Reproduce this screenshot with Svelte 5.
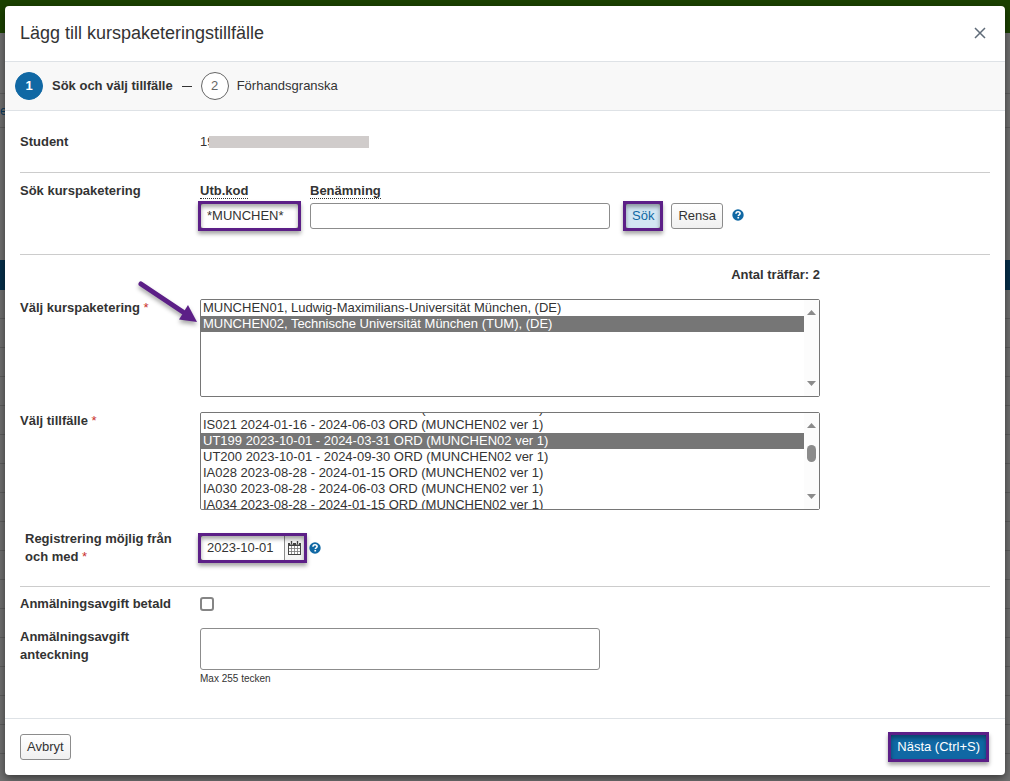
<script>
  import { onMount } from 'svelte'

  const packages = [
    { code: 'MUNCHEN01', label: 'MUNCHEN01, Ludwig-Maximilians-Universität München, (DE)' },
    { code: 'MUNCHEN02', label: 'MUNCHEN02, Technische Universität München (TUM), (DE)' },
  ]

  const occasions = [
    'IS020 2024-01-16 - 2024-06-03',
    'IS021 2024-01-16 - 2024-06-03',
    'UT199 2023-10-01 - 2024-03-31',
    'UT200 2023-10-01 - 2024-09-30',
    'IA028 2023-08-28 - 2024-01-15',
    'IA030 2023-08-28 - 2024-06-03',
    'IA034 2023-08-28 - 2024-01-15',
    'IA035 2023-08-28 - 2024-06-03',
  ]

  let code = $state('*MUNCHEN*')
  let title = $state('')
  let selectedPackage = $state('MUNCHEN02')
  let selectedOccasion = $state(occasions[2])
  let date = $state('2023-10-01')
  let feePaid = $state(false)
  let note = $state('')
  let occasionList

  function clearSearch() {
    code = ''
    title = ''
  }

  onMount(() => {
    occasionList.scrollTop = 12
  })
</script>

{#snippet help()}
  <button type="button" class="help" aria-label="Hjälp">
    <svg viewBox="0 0 12 12" width="12" height="12">
      <circle cx="6" cy="6" r="5.7" fill="#1068a4" />
      <path d="M4 4.7C4 3.3 4.9 2.8 6 2.8s2.1.6 2.1 1.7C8.1 5.8 6.3 5.8 6.3 7" fill="none" stroke="#fff" stroke-width="1.6" />
      <rect x="5.4" y="7.9" width="1.7" height="1.6" fill="#fff" />
    </svg>
  </button>
{/snippet}

{#snippet scrollbar(thumb)}
  <div class="scrollbar" aria-hidden="true">
    <svg viewBox="0 0 9 5" width="9" height="5"><path d="M4.5 0 9 5H0z" fill="#8b8b8b" /></svg>
    {#if thumb}<span class="thumb"></span>{/if}
    <svg class="down" viewBox="0 0 9 5" width="9" height="5"><path d="M4.5 5 9 0H0z" fill="#8b8b8b" /></svg>
  </div>
{/snippet}

<div class="screen">
  <div class="page" aria-hidden="true">
    <div class="topbar"></div>
    <div class="menu"></div>
    <div class="tabs">e</div>
    <div class="upper"></div>
    <div class="band"></div>
    <div class="rows"></div>
  </div>

  <div class="modal" role="dialog" aria-labelledby="modal-title">
    <header>
      <h1 id="modal-title">Lägg till kurspaketeringstillfälle</h1>
      <button type="button" class="close" aria-label="Stäng">
        <svg viewBox="0 0 12 12" width="12" height="12">
          <path d="M1 1l10 10M11 1L1 11" stroke="#5f6b78" stroke-width="1.5" />
        </svg>
      </button>
    </header>

    <ol class="steps">
      <li class="active"><span class="num">1</span>Sök och välj tillfälle</li>
      <li class="dash" aria-hidden="true"></li>
      <li><span class="num">2</span>Förhandsgranska</li>
    </ol>

    <main>
      <section class="row student">
        <span class="label">Student</span>
        <span class="person">19<span class="mask"></span></span>
      </section>

      <section class="row search">
        <span class="label">Sök kurspaketering</span>
        <div class="fields">
          <div class="field code">
            <label for="code"><abbr title="Utbildningskod">Utb.kod</abbr></label>
            <span class="marked"><input id="code" type="text" bind:value={code} /></span>
          </div>
          <div class="field title">
            <label for="title"><abbr title="Benämning">Benämning</abbr></label>
            <input id="title" type="text" bind:value={title} />
          </div>
          <span class="marked find"><button type="button" class="btn">Sök</button></span>
          <button type="button" class="btn" onclick={clearSearch}>Rensa</button>
          {@render help()}
        </div>
      </section>

      <section class="choices">
        <p class="hits">Antal träffar: 2</p>
        <div class="row">
          <label class="label" for="package">Välj kurspaketering <i>*</i></label>
          <div class="listbox">
            <svg class="arrow" viewBox="0 0 66 48" width="66" height="48" aria-hidden="true">
              <path d="M6 4L48 32" stroke="#5c1f87" stroke-width="5" stroke-linecap="round" />
              <path d="M62 42L44 39.5L53 25z" fill="#5c1f87" />
            </svg>
            <select id="package" size="6" bind:value={selectedPackage}>
              {#each packages as p}
                <option value={p.code}>{p.label}</option>
              {/each}
            </select>
            {@render scrollbar(false)}
          </div>
        </div>
        <div class="row">
          <label class="label" for="occasion">Välj tillfälle <i>*</i></label>
          <div class="listbox">
            <select id="occasion" size="6" bind:value={selectedOccasion} bind:this={occasionList}>
              {#each occasions as o}
                <option value={o}>{o} ORD (MUNCHEN02 ver 1)</option>
              {/each}
            </select>
            {@render scrollbar(true)}
          </div>
        </div>
        <div class="row register">
          <label class="label" for="date">Registrering möjlig från och med <i>*</i></label>
          <div class="date">
            <span class="marked">
              <input id="date" type="text" bind:value={date} />
              <button type="button" class="calendar" aria-label="Välj datum">
                <svg viewBox="0 0 13 14" width="13" height="14">
                  <rect x="0.5" y="2.5" width="12" height="11" fill="#fff" stroke="#444" />
                  <path d="M0 2h13v3H0z" fill="#444" />
                  <path d="M3.5 5v8M6.5 5v8M9.5 5v8M1 7.5h11M1 10.5h11" stroke="#777" stroke-width="0.8" />
                  <path d="M3.5 0.5v3M9.5 0.5v3" stroke="#fff" stroke-width="3" />
                  <path d="M3.5 0v3.5M9.5 0v3.5" stroke="#444" stroke-width="1.4" />
                </svg>
              </button>
            </span>
            {@render help()}
          </div>
        </div>
      </section>

      <section class="fee">
        <div class="row">
          <label class="label" for="paid">Anmälningsavgift betald</label>
          <input id="paid" type="checkbox" bind:checked={feePaid} />
        </div>
        <div class="row note">
          <label class="label" for="note">Anmälningsavgift anteckning</label>
          <div class="notebox">
            <textarea id="note" maxlength="255" bind:value={note}></textarea>
            <small>Max 255 tecken</small>
          </div>
        </div>
      </section>
    </main>

    <footer>
      <button type="button" class="btn">Avbryt</button>
      <span class="marked"><button type="button" class="btn primary">Nästa (Ctrl+S)</button></span>
    </footer>
  </div>
</div>

<style>
  :global(body) {
    margin: 0;
    background: #707070;
  }
  .screen {
    display: grid;
    min-height: 100vh;
    font: 13px/18px 'Liberation Sans', Arial, sans-serif;
    color: #333;
  }
  .screen * {
    box-sizing: border-box;
  }
  .page,
  .modal {
    grid-area: 1 / 1;
  }

  /* Dimmed page behind the dialog */
  .page {
    display: flex;
    flex-direction: column;
    background: #707070;
  }
  .topbar {
    height: 33px;
    background: #1b4200;
  }
  .menu {
    height: 61px;
    border-bottom: 1px solid #5e5e5e;
  }
  .tabs {
    height: 34px;
    border-bottom: 1px solid #5e5e5e;
    line-height: 34px;
    color: #0a3a5c;
  }
  .upper {
    height: 132px;
  }
  .band {
    height: 30px;
    background: #06304b;
  }
  .rows {
    flex: 1;
    background: repeating-linear-gradient(transparent 0 28px, #5e5e5e 28px 29px);
  }

  .modal {
    display: flex;
    flex-direction: column;
    margin: 6px 5px;
    border-radius: 4px;
    background: #fff;
    box-shadow: 0 3px 9px rgba(0, 0, 0, 0.5);
  }
  header {
    display: flex;
    align-items: center;
    justify-content: space-between;
    height: 56px;
    padding: 0 19px 2px 15px;
    border-bottom: 1px solid #dee2e6;
  }
  h1 {
    margin: 0;
    font-size: 18px;
    font-weight: 400;
  }
  button {
    font: inherit;
    cursor: pointer;
  }
  .close,
  .help {
    display: flex;
    padding: 0;
    border: 0;
    background: none;
  }

  .steps {
    display: flex;
    align-items: center;
    gap: 9px;
    height: 49px;
    margin: 0;
    padding: 0 10px;
    list-style: none;
    border-bottom: 1px solid #dee2e6;
    background: #f8f8f8;
  }
  .steps li {
    display: flex;
    align-items: center;
    gap: 8px;
  }
  .steps .active {
    gap: 9px;
    font-weight: 700;
  }
  .steps .dash {
    width: 10px;
    height: 1px;
    background: #333;
  }
  .num {
    display: grid;
    place-items: center;
    width: 28px;
    height: 28px;
    border: 1px solid #666;
    border-radius: 50%;
    color: #666;
    background: #fff;
  }
  .active .num {
    border-color: #1068a4;
    color: #fff;
    background: #1068a4;
  }

  main {
    flex: 1;
    padding: 0 15px;
  }
  section {
    border-bottom: 1px solid #ccc;
  }
  .row {
    display: flex;
    align-items: flex-start;
  }
  .label {
    flex: none;
    width: 180px;
    padding-right: 20px;
    font-weight: 700;
  }
  .label i {
    color: #c9302c;
    font-style: normal;
    font-weight: 400;
  }
  .student {
    padding: 22px 0 21px;
  }
  .person {
    display: flex;
    align-items: center;
  }
  .mask {
    width: 160px;
    height: 12px;
    margin-left: -5px;
    background: #d0cccb;
  }

  .search {
    padding: 9px 0 25px;
  }
  .fields {
    display: flex;
    flex: 1;
    align-items: flex-end;
  }
  .field {
    display: flex;
    flex-direction: column;
    align-items: stretch;
    gap: 4px;
    font-weight: 700;
  }
  .field label {
    line-height: 17px;
  }
  .code {
    width: 99px;
    margin-right: 11px;
  }
  .title {
    flex: 0 1 300px;
    margin-right: 15px;
  }
  abbr {
    border-bottom: 1px dotted #333;
    text-decoration: none;
  }
  input[type='text'],
  textarea {
    width: 100%;
    padding: 0 6px 2px;
    font: inherit;
    font-weight: 400;
    color: #333;
    background: #fff;
    border: 1px solid #8c8c8c;
    border-radius: 3px;
  }
  input[type='text'] {
    height: 26px;
  }
  .btn {
    height: 26px;
    padding: 0 6px;
    color: #333;
    background: linear-gradient(#fff, #f0f0f0);
    border: 1px solid #8c8c8c;
    border-radius: 3px;
  }
  .fields .help {
    margin: 0 0 8px 9px;
  }

  /* Highlight frame around a control */
  .marked {
    position: relative;
    display: flex;
  }
  .marked::after {
    content: '';
    position: absolute;
    inset: -2px;
    border: 3px solid #5c1f87;
    box-shadow:
      0 3px 4px rgba(0, 0, 0, 0.35),
      inset 0 3px 4px rgba(0, 0, 0, 0.35);
    pointer-events: none;
  }
  .find {
    margin-right: 10px;
  }
  .find .btn {
    color: #1068a4;
    background: #d3e6f3;
  }

  .hits {
    width: 800px;
    max-width: 100%;
    margin: 0 0 15px;
    text-align: right;
    font-weight: 700;
  }
  .choices {
    padding: 11px 0 20px;
  }
  .choices .row {
    margin-bottom: 15px;
  }
  .listbox {
    position: relative;
    display: flex;
    flex: 0 1 620px;
    border: 1px solid #767676;
    border-radius: 2px;
  }
  select {
    flex: 1;
    min-width: 0;
    height: 96px;
    padding: 0;
    font: inherit;
    color: #333;
    background: #fff;
    border: 0;
    outline: 0;
    overflow-y: auto;
    scrollbar-width: none;
  }
  option {
    height: 16px;
    min-height: 16px;
    padding: 0 2px;
    line-height: 16px;
  }
  option:checked {
    color: #fff;
    background: #767676 linear-gradient(#767676, #767676);
  }
  .scrollbar {
    display: flex;
    flex-direction: column;
    align-items: center;
    width: 15px;
    padding: 10px 0;
    background: #fcfcfc;
  }
  .thumb {
    width: 9px;
    height: 17px;
    margin-top: 17px;
    border-radius: 5px;
    background: #8b8b8b;
  }
  .down {
    margin-top: auto;
  }
  .arrow {
    position: absolute;
    right: 100%;
    top: -20px;
    filter: drop-shadow(0 3px 2px rgba(0, 0, 0, 0.35));
  }

  .choices .register {
    margin: 20px 0 0;
  }
  .register .label {
    padding: 0 20px 0 5px;
  }
  .date {
    display: flex;
    align-items: center;
    gap: 4px;
    margin-top: 5px;
  }
  .date .marked {
    width: 105px;
  }
  .date input[type='text'] {
    border-right: 0;
    border-radius: 3px 0 0 3px;
  }
  .calendar {
    display: grid;
    place-items: center;
    width: 21px;
    flex: none;
    padding: 0;
    border: 1px solid #8c8c8c;
    background: #f6f6f6;
  }

  .fee {
    padding: 8px 0 30px;
    border-bottom: 0;
  }
  input[type='checkbox'] {
    appearance: none;
    width: 14px;
    height: 14px;
    margin: 2px 0 0;
    border: 2px solid #858585;
    border-radius: 3px;
    background: #fff;
  }
  .note {
    margin-top: 15px;
  }
  .note .label {
    padding-right: 40px;
  }
  .notebox {
    display: flex;
    flex: 0 1 400px;
    flex-direction: column;
  }
  textarea {
    height: 42px;
    resize: none;
  }
  small {
    font-size: 10px;
  }

  footer {
    display: flex;
    align-items: center;
    justify-content: space-between;
    height: 57px;
    padding: 0 18px 0 15px;
    border-top: 1px solid #dee2e6;
  }
  .primary {
    color: #fff;
    background: #1068a4;
    border-color: #0d5687;
  }
</style>
